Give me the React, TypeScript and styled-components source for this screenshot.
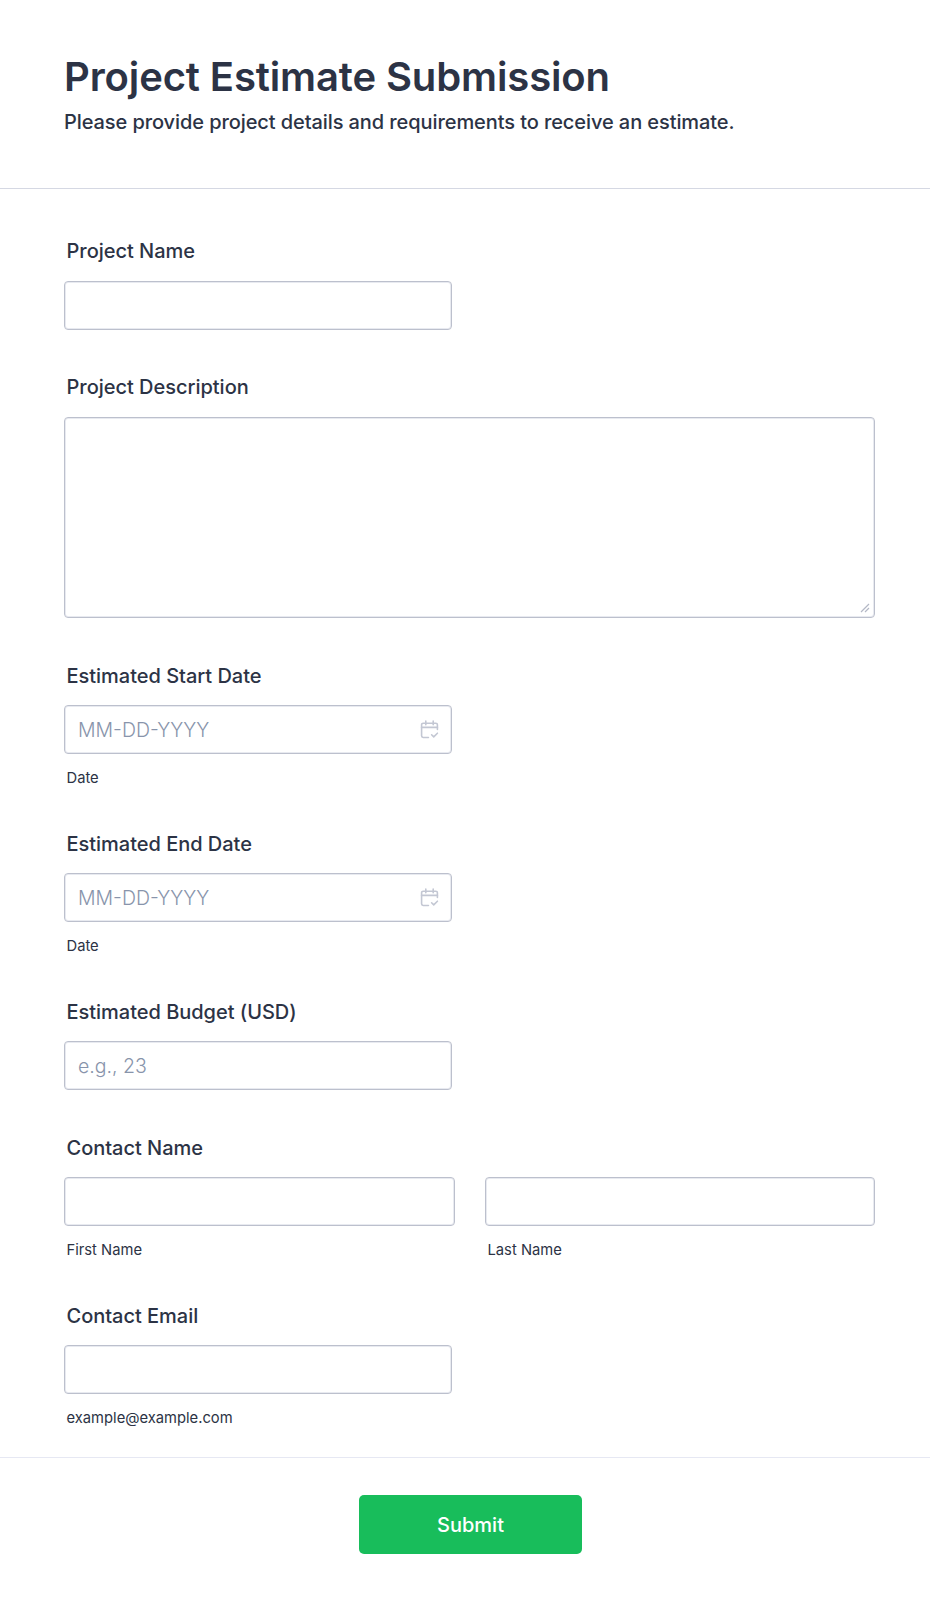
import React from 'react'
import styled, { createGlobalStyle } from 'styled-components'

const GlobalStyle = createGlobalStyle`
  html, body { margin: 0; padding: 0; background: #fff; }
  body { font-family: Inter, "Liberation Sans", sans-serif; color: #2c3345; }
  * { box-sizing: border-box; }
`

const Page = styled.div`
  width: 930px;
  height: 1604px;
  background: #fff;
  overflow: hidden;
`

const Header = styled.header`
  height: 189px;
  padding: 53px 64px 0;
  border-bottom: 1px solid #d5d8e3;
`

const Title = styled.h1`
  margin: 0 0 9px;
  font-size: 40px;
  line-height: 48px;
  font-weight: 600;
  letter-spacing: -0.12px;
  color: #2c3345;
`

const Subtitle = styled.p`
  margin: 0;
  font-size: 20px;
  line-height: 24px;
  font-weight: 500;
  letter-spacing: -0.085px;
  color: #2c3345;
`

const Fields = styled.main`
  padding: 48px 55px 0 64px;
  height: 1269px;
  border-bottom: 1px solid #e6e8f3;
`

const Field = styled.section<{ $gap: number }>`
  margin-bottom: ${(p) => p.$gap}px;
`

const Label = styled.label<{ $below?: number }>`
  display: block;
  height: 28px;
  margin: 0 0 ${(p) => p.$below ?? 16}px 2.5px;
  font-size: 20px;
  line-height: 28px;
  font-weight: 500;
  letter-spacing: -0.02px;
  color: #2c3345;
`

const Box = styled.div<{ $width?: number }>`
  position: relative;
  width: ${(p) => p.$width ?? 388}px;
`

const TextInput = styled.input`
  display: block;
  width: 100%;
  height: 49px;
  padding: 0 13px;
  border: 1px solid #bcc0cd;
  border-radius: 4px;
  box-shadow: inset 0 0 0 1px #e8eaf0;
  background: #fff;
  outline: none;
  font-family: inherit;
  font-size: 19.5px;
  color: #2c3345;

  &::placeholder {
    color: #8894ab;
    opacity: 1;
    font-weight: 300;
  }
`

const TextArea = styled.textarea`
  display: block;
  width: 100%;
  height: 201px;
  padding: 12px;
  border: 1px solid #bcc0cd;
  border-radius: 4px;
  box-shadow: inset 0 0 0 1px #e8eaf0;
  background: #fff;
  outline: none;
  resize: none;
  font-family: inherit;
  font-size: 16px;
`

const ResizeGrip = styled.svg`
  position: absolute;
  right: 5px;
  bottom: 5px;
  width: 10px;
  height: 10px;
  fill: none;
  stroke: #b4b8c6;
  stroke-width: 1.2;
`

const CalendarIcon = styled.svg`
  position: absolute;
  right: 13px;
  top: 15px;
  width: 19px;
  height: 19px;
  fill: none;
  stroke: #c3c7d3;
  stroke-width: 1.5;
  stroke-linecap: round;
  stroke-linejoin: round;
`

const Hint = styled.div`
  margin: 15px 0 0 2.5px;
  height: 18px;
  font-size: 14.75px;
  line-height: 18px;
  color: #2c3345;
`

const NameRow = styled.div`
  display: grid;
  grid-template-columns: 391px 390px;
  column-gap: 30px;
`

const Footer = styled.footer`
  display: flex;
  justify-content: center;
  padding: 37px 0 0 10px;
`

const SubmitButton = styled.button`
  width: 223px;
  height: 59px;
  padding: 0 0 0 1px;
  border: 0;
  border-radius: 5px;
  background: #18bd5b;
  font-family: inherit;
  font-size: 20px;
  font-weight: 450;
  color: #fff;
  cursor: pointer;
`

const DateInput = () => (
  <Box>
    <TextInput placeholder="MM-DD-YYYY" />
    <CalendarIcon viewBox="0 0 18 18">
      <path d="M8 16.5H3a1.5 1.5 0 0 1-1.5-1.5V4.5A1.5 1.5 0 0 1 3 3h12a1.5 1.5 0 0 1 1.5 1.5V9" />
      <path d="M1.5 7h15M5.5 1v3.5M12.5 1v3.5" />
      <path d="M11 14l2 2 3.5-3.5" />
    </CalendarIcon>
  </Box>
)

export default function App() {
  return (
    <Page>
      <GlobalStyle />
      <Header>
        <Title>Project Estimate Submission</Title>
        <Subtitle>Please provide project details and requirements to receive an estimate.</Subtitle>
      </Header>
      <Fields>
        <Field $gap={43}>
          <Label>Project Name</Label>
          <Box><TextInput /></Box>
        </Field>
        <Field $gap={44}>
          <Label>Project Description</Label>
          <Box $width={811}>
            <TextArea />
            <ResizeGrip viewBox="0 0 10 10">
              <path d="M1 9L9 1M5 9l4-4" />
            </ResizeGrip>
          </Box>
        </Field>
        <Field $gap={43}>
          <Label $below={15}>Estimated Start Date</Label>
          <DateInput />
          <Hint>Date</Hint>
        </Field>
        <Field $gap={43}>
          <Label $below={15}>Estimated End Date</Label>
          <DateInput />
          <Hint>Date</Hint>
        </Field>
        <Field $gap={44}>
          <Label $below={15}>Estimated Budget (USD)</Label>
          <Box><TextInput placeholder="e.g., 23" /></Box>
        </Field>
        <Field $gap={43}>
          <Label $below={15}>Contact Name</Label>
          <NameRow>
            <div>
              <TextInput />
              <Hint>First Name</Hint>
            </div>
            <div>
              <TextInput />
              <Hint>Last Name</Hint>
            </div>
          </NameRow>
        </Field>
        <Field $gap={0}>
          <Label $below={15}>Contact Email</Label>
          <Box><TextInput /></Box>
          <Hint>example@example.com</Hint>
        </Field>
      </Fields>
      <Footer>
        <SubmitButton>Submit</SubmitButton>
      </Footer>
    </Page>
  )
}
